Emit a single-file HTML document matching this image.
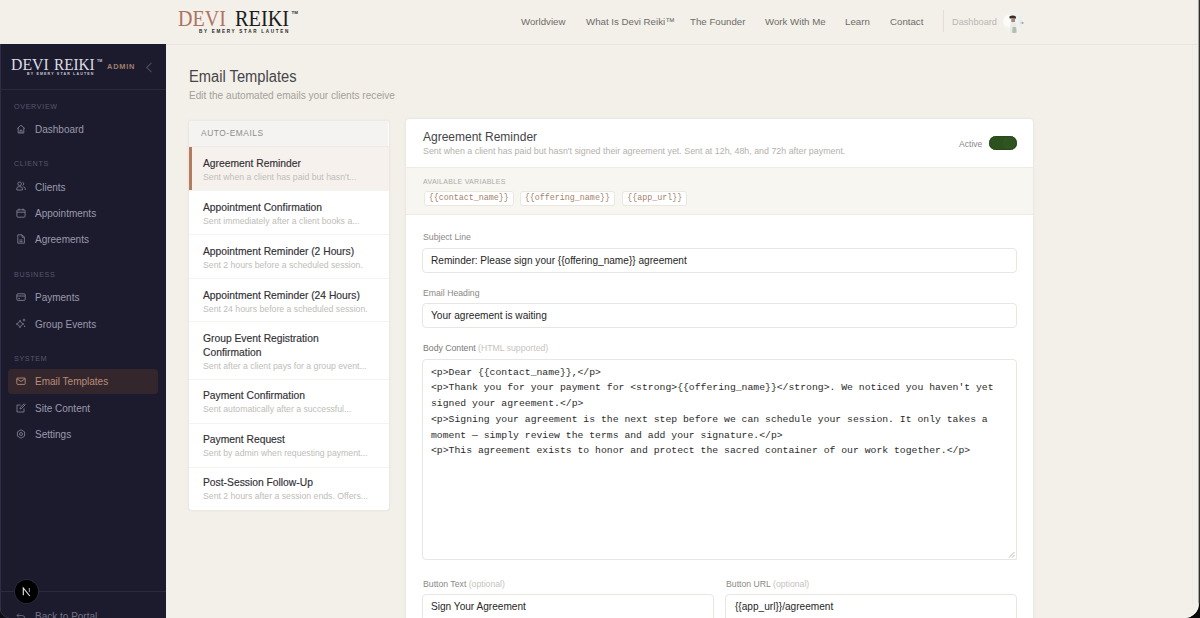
<!DOCTYPE html>
<html><head><meta charset="utf-8">
<style>
*{box-sizing:border-box;margin:0;padding:0}
html,body{width:1200px;height:618px;overflow:hidden}
body{background:#f3f0e9;font-family:"Liberation Sans",sans-serif;position:relative;color:#2a2a2e}
.abs{position:absolute;white-space:nowrap}
#hdr{position:absolute;left:0;top:0;width:1200px;height:45px;background:#f3f0ea;border-bottom:1px solid #e9e5de}
.nav{position:absolute;top:16px;font-size:9.7px;line-height:12px;color:#6e6c68}
.logo{position:absolute;font-family:"Liberation Serif",serif;white-space:nowrap;transform-origin:0 0}
.sub{position:absolute;font-family:"Liberation Sans",sans-serif;font-weight:bold;white-space:nowrap;transform-origin:0 0}
#side{position:absolute;left:0;top:44px;width:166px;height:574px;background:#1c1b2e}
.sec{position:absolute;left:14px;font-size:7.1px;letter-spacing:0.7px;color:#57566b;line-height:8px}
.item{position:absolute;left:35px;font-size:10px;line-height:12px;color:#9a99ab}
.ico{position:absolute;left:16px;width:10px;height:10px}
.card{position:absolute;background:#fff;border:1px solid #ece9e4;border-radius:4px;box-shadow:0 0 2px rgba(60,40,20,0.06)}
.li{position:absolute;left:0;width:199.5px;border-top:1px solid #f5f3f0}
.li .t{position:absolute;left:14px;font-size:10.3px;line-height:14px;color:#313035;-webkit-text-stroke:0.15px #313035;white-space:nowrap}
.li .d{position:absolute;left:14px;font-size:8.7px;line-height:11px;color:#c0bdb8;white-space:nowrap}
.lbl{position:absolute;left:17px;font-size:8.7px;line-height:11px;color:#8b8986;white-space:nowrap}
.lbl i{font-style:normal;color:#c6c3be}
.inp{position:absolute;background:#fff;border:1px solid #e9e6e1;border-radius:4px}
.inp span{position:absolute;left:8px;font-size:10.1px;line-height:12px;color:#262626;white-space:nowrap}
.chip{position:absolute;top:71.8px;height:15px;border:1px solid #ece7df;border-radius:3px;background:#fff;font-family:"Liberation Mono",monospace;font-size:8.35px;line-height:13px;color:#a47f69;padding:0 4.2px;white-space:nowrap}
pre{font-family:"Liberation Mono",monospace;font-size:9.78px;line-height:15.8px;color:#2b2b2b;white-space:pre}
</style></head><body>

<div id="hdr">
  <div class="logo" style="left:177.6px;top:6px;font-size:24px;line-height:24px;color:#ad7361;transform:scaleX(0.835)">DEVI</div>
  <div class="logo" style="left:234.6px;top:6px;font-size:24px;line-height:24px;color:#1c1c1c;transform:scaleX(0.845)">REIKI</div>
  <div class="logo" style="left:291.5px;top:9.8px;font-size:4.4px;line-height:5px;color:#2a2a2a;font-family:'Liberation Sans',sans-serif;font-weight:bold">TM</div>
  <div class="sub" style="left:199px;top:28.7px;font-size:4.6px;line-height:5px;letter-spacing:1.7px;color:#262626">BY EMERY STAR LAUTEN</div>
  <div class="nav" style="left:521px">Worldview</div>
  <div class="nav" style="left:586px">What Is Devi Reiki™</div>
  <div class="nav" style="left:690px">The Founder</div>
  <div class="nav" style="left:765px">Work With Me</div>
  <div class="nav" style="left:845px">Learn</div>
  <div class="nav" style="left:890px">Contact</div>
  <div class="abs" style="left:943px;top:10px;width:1px;height:22px;background:#e3dfd7"></div>
  <div class="nav" style="left:952px;color:#b8b5b0;font-size:9.2px">Dashboard</div>
  <svg class="abs" style="left:1002.5px;top:12px" width="21" height="21" viewBox="0 0 21 21">
    <defs><clipPath id="avc"><circle cx="10.5" cy="10.5" r="10.5"/></clipPath></defs>
    <g clip-path="url(#avc)">
      <rect width="21" height="21" fill="#f2f3ef"/>
      <circle cx="6" cy="9" r="6" fill="#fbfcf8"/>
      <path d="M6.3 4.6 Q8.5 3.2 11.5 3.8 Q13.4 4.2 13 6 L12.5 6.8 Q9.5 6.2 6.6 6.6 Z" fill="#3b2d2a"/>
      <path d="M8.2 6.5 H12 V9.8 Q10 10.8 8.2 9.8 Z" fill="#a8877a"/>
      <path d="M7.5 10.5 Q10 9.5 13 10.5 L14 21 H7 Z" fill="#e9ebe6"/>
      <path d="M9.5 15.5 Q11 14 13.2 15.5 L13.6 21 H9.2 Z" fill="#b4bdae"/>
      <rect x="17.2" y="9.8" width="3.4" height="2.2" rx="1" fill="#a6a8a1"/>
      <rect x="16" y="4" width="3" height="12" fill="#e8ecea" opacity="0.7"/>
    </g>
  </svg>
</div>

<div id="side">
  <div class="abs" style="left:0;top:0;width:1px;height:574px;background:#2f2e44"></div>
  <div class="logo" style="left:11.4px;top:13px;font-size:16.6px;line-height:16.6px;color:#dddce4;transform:scaleX(0.95)">DEVI</div>
  <div class="logo" style="left:53.7px;top:13px;font-size:16.6px;line-height:16.6px;color:#dddce4;transform:scaleX(0.917)">REIKI</div>
  <div class="logo" style="left:97px;top:14.5px;font-size:3.6px;line-height:4px;color:#c8c7d0;font-family:'Liberation Sans',sans-serif;font-weight:bold">TM</div>
  <div class="sub" style="left:27px;top:28px;font-size:3.6px;line-height:4px;letter-spacing:1.15px;color:#c9c8d2">BY EMERY STAR LAUTEN</div>
  <div class="abs" style="left:107px;top:19px;font-size:7.4px;line-height:8px;font-weight:bold;letter-spacing:0.8px;color:#a07f6d">ADMIN</div>
  <svg class="abs" style="left:144.5px;top:17.5px" width="8" height="11" viewBox="0 0 8 11"><path d="M6.5 0.8 L1.6 5.5 L6.5 10.2" fill="none" stroke="#4a495c" stroke-width="1.1"/></svg>
  <div class="abs" style="left:0;top:45px;width:166px;height:1px;background:#2a2939"></div>

  <div class="sec" style="top:59px">OVERVIEW</div>
  <svg class="ico" style="top:80px" viewBox="0 0 10 10"><path d="M1.2 4.6 L5 1.2 L8.8 4.6 M2.2 3.8 V9 H7.8 V3.8 M4 9 V6.2 H6 V9" fill="none" stroke="#7e7d8f" stroke-width="0.9"/></svg>
  <div class="item" style="top:80px">Dashboard</div>

  <div class="sec" style="top:116px">CLIENTS</div>
  <svg class="ico" style="top:137px" viewBox="0 0 10 10"><circle cx="3.6" cy="2.8" r="1.8" fill="none" stroke="#7e7d8f" stroke-width="0.9"/><path d="M0.8 9 V7.4 Q0.8 5.6 3.6 5.6 Q6.4 5.6 6.4 7.4 V9 Z M6.5 1.2 A1.8 1.8 0 0 1 6.5 4.6 M7.4 5.8 Q9.2 6.2 9.2 7.6 V9" fill="none" stroke="#7e7d8f" stroke-width="0.9"/></svg>
  <div class="item" style="top:137.5px">Clients</div>
  <svg class="ico" style="top:164px" viewBox="0 0 10 10"><rect x="0.9" y="1.8" width="8.2" height="7.4" rx="1" fill="none" stroke="#7e7d8f" stroke-width="0.9"/><path d="M3 0.5 V2.6 M7 0.5 V2.6 M0.9 4.2 H9.1" fill="none" stroke="#7e7d8f" stroke-width="0.9"/></svg>
  <div class="item" style="top:163.7px">Appointments</div>
  <svg class="ico" style="top:190px" viewBox="0 0 10 10"><path d="M1.8 0.8 H6 L8.4 3.2 V9.2 H1.8 Z M6 0.8 V3.2 H8.4 M3.4 6 H6.6 M3.4 7.6 H6.6" fill="none" stroke="#7e7d8f" stroke-width="0.9"/></svg>
  <div class="item" style="top:190px">Agreements</div>

  <div class="sec" style="top:226.5px">BUSINESS</div>
  <svg class="ico" style="top:248px" viewBox="0 0 10 10"><rect x="0.8" y="1.8" width="8.4" height="6.6" rx="1" fill="none" stroke="#7e7d8f" stroke-width="0.9"/><path d="M0.8 4 H9.2 M2.2 6.6 H4" fill="none" stroke="#7e7d8f" stroke-width="0.9"/></svg>
  <div class="item" style="top:248px">Payments</div>
  <svg class="ico" style="top:274px" viewBox="0 0 10 10"><path d="M4 2.2 Q4.6 5.4 7.8 6 Q4.6 6.6 4 9.8 Q3.4 6.6 0.2 6 Q3.4 5.4 4 2.2 Z" fill="none" stroke="#7e7d8f" stroke-width="0.85" stroke-linejoin="round"/><path d="M8 0.6 V3.4 M6.6 2 H9.4" stroke="#7e7d8f" stroke-width="0.8"/><circle cx="8.6" cy="8.2" r="0.7" fill="#7e7d8f"/></svg>
  <div class="item" style="top:274.6px">Group Events</div>

  <div class="sec" style="top:311px">SYSTEM</div>
  <div class="abs" style="left:8px;top:325px;width:150px;height:25px;background:#33272d;border-radius:4px"></div>
  <svg class="ico" style="top:332px" viewBox="0 0 10 10"><rect x="0.8" y="2" width="8.4" height="6.4" rx="0.8" fill="none" stroke="#b88a76" stroke-width="0.9"/><path d="M0.8 2.6 L5 5.6 L9.2 2.6" fill="none" stroke="#b88a76" stroke-width="0.9"/></svg>
  <div class="item" style="top:332px;color:#bb8c77">Email Templates</div>
  <svg class="ico" style="top:358.5px" viewBox="0 0 10 10"><path d="M8 5.4 V9 H1 V2 H4.6 M4 6 L4.4 4.4 L8.2 0.8 L9.2 1.8 L5.4 5.6 Z" fill="none" stroke="#7e7d8f" stroke-width="0.9"/></svg>
  <div class="item" style="top:359px">Site Content</div>
  <svg class="ico" style="top:384.5px" viewBox="0 0 10 10"><circle cx="5" cy="5" r="1.5" fill="none" stroke="#7e7d8f" stroke-width="0.9"/><path d="M5 0.8 L8.6 2.9 V7.1 L5 9.2 L1.4 7.1 V2.9 Z" fill="none" stroke="#7e7d8f" stroke-width="0.9"/></svg>
  <div class="item" style="top:385px">Settings</div>

  <div class="abs" style="left:0;top:547px;width:166px;height:1px;background:#2c2b3e"></div>
  <svg class="ico" style="top:568px" viewBox="0 0 10 10"><path d="M3 1.5 L1 3.5 L3 5.5 M1 3.5 H6 Q9 3.5 9 6.5 Q9 9 6 9 H4" fill="none" stroke="#6a697c" stroke-width="0.9"/></svg>
  <div class="item" style="top:567px;color:#727185">Back to Portal</div>
  <div class="abs" style="left:15px;top:536px;width:23px;height:23px;border-radius:50%;background:#000;box-shadow:0 0 0 1px #2a2a36"></div>
  <svg class="abs" style="left:21px;top:542px" width="11" height="11" viewBox="0 0 11 11"><path d="M2.3 9.2 V2 L8.8 10" fill="none" stroke="#ececec" stroke-width="1.1"/><path d="M8.3 2 V6.2" fill="none" stroke="#bdbdbd" stroke-width="0.9"/></svg>
  <svg class="abs" style="left:0;top:558px" width="16" height="16" viewBox="0 0 16 16"><path d="M0 5.7 A10.4 10.4 0 0 0 9 16 L0 16 Z" fill="#0e0e16"/><path d="M0 5.7 A10.4 10.4 0 0 0 9 16" fill="none" stroke="#3c3b48" stroke-width="0.8"/></svg>
</div>

<!-- Main -->
<div class="abs" style="left:189px;top:68px;font-size:15.8px;line-height:18px;color:#46454a;transform:scaleX(0.93);transform-origin:0 0">Email Templates</div>
<div class="abs" style="left:189px;top:90px;font-size:10.1px;line-height:12px;color:#a3a09b">Edit the automated emails your clients receive</div>

<div class="card" style="left:188px;top:119.5px;width:202px;height:391px;overflow:hidden">
  <div class="abs" style="left:0;top:0;width:199px;height:26px;background:#f4f3f1"></div>
  <div class="abs" style="left:12px;top:7px;font-size:8.4px;line-height:10px;letter-spacing:0.55px;color:#8f8d8a">AUTO-EMAILS</div>
  <div class="li" style="top:25px;height:45px;background:#f7f1ed;border-top:1px solid #efebe6"><div class="abs" style="left:0;top:0;width:2.5px;height:44px;background:#b57b5e"></div><div class="t" style="top:10px">Agreement Reminder</div><div class="d" style="top:25px">Sent when a client has paid but hasn't...</div></div>
  <div class="li" style="top:69px;height:44px"><div class="t" style="top:10px">Appointment Confirmation</div><div class="d" style="top:25px">Sent immediately after a client books a...</div></div>
  <div class="li" style="top:113px;height:44px"><div class="t" style="top:10px">Appointment Reminder (2 Hours)</div><div class="d" style="top:25px">Sent 2 hours before a scheduled session.</div></div>
  <div class="li" style="top:157px;height:44px"><div class="t" style="top:10px">Appointment Reminder (24 Hours)</div><div class="d" style="top:25px">Sent 24 hours before a scheduled session.</div></div>
  <div class="li" style="top:200px;height:58px"><div class="t" style="top:10px">Group Event Registration</div><div class="t" style="top:24px">Confirmation</div><div class="d" style="top:39px">Sent after a client pays for a group event...</div></div>
  <div class="li" style="top:258px;height:44px"><div class="t" style="top:9px">Payment Confirmation</div><div class="d" style="top:24px">Sent automatically after a successful...</div></div>
  <div class="li" style="top:302.5px;height:44px"><div class="t" style="top:8.5px">Payment Request</div><div class="d" style="top:23.5px">Sent by admin when requesting payment...</div></div>
  <div class="li" style="top:346px;height:44px"><div class="t" style="top:8px">Post-Session Follow-Up</div><div class="d" style="top:23px">Sent 2 hours after a session ends. Offers...</div></div>
</div>

<div class="card" style="left:405px;top:118px;width:629px;height:520px;overflow:hidden">
  <div class="abs" style="left:17px;top:11px;font-size:12px;line-height:15px;color:#444349">Agreement Reminder</div>
  <div class="abs" style="left:17px;top:26.5px;font-size:8.87px;line-height:11px;color:#b4b1ac">Sent when a client has paid but hasn't signed their agreement yet. Sent at 12h, 48h, and 72h after payment.</div>
  <div class="abs" style="left:553px;top:20px;font-size:8.6px;line-height:10px;color:#8a8986">Active</div>
  <div class="abs" style="left:583px;top:17px;width:28px;height:14px;border-radius:7px;background:#2d501f;box-shadow:inset 0 0 0 0.6px #24421a"></div>
  <div class="abs" style="left:598px;top:19px;width:10px;height:10px;border-radius:50%;background:#2f541f;box-shadow:0 0 0 0.5px #365e25"></div>
  <div class="abs" style="left:0;top:48px;width:627px;height:48px;background:#f8f6f1;border-top:1px solid #efece6;border-bottom:1px solid #efece6"></div>
  <div class="abs" style="left:17px;top:59px;font-size:7px;line-height:8px;letter-spacing:0.3px;color:#aeaba6">AVAILABLE VARIABLES</div>
  <div class="chip" style="left:17.5px">{{contact_name}}</div>
  <div class="chip" style="left:113.6px">{{offering_name}}</div>
  <div class="chip" style="left:216px">{{app_url}}</div>

  <div class="lbl" style="top:113px">Subject Line</div>
  <div class="inp" style="left:16px;top:128.5px;width:594.5px;height:25.5px"><span style="top:6px">Reminder: Please sign your {{offering_name}} agreement</span></div>
  <div class="lbl" style="top:169px">Email Heading</div>
  <div class="inp" style="left:16px;top:183.5px;width:594.5px;height:25.5px"><span style="top:6px">Your agreement is waiting</span></div>
  <div class="lbl" style="top:224px;color:#7a7875">Body Content <i>(HTML supported)</i></div>
  <div class="inp" style="left:16px;top:239.5px;width:594.5px;height:201px;border-bottom-right-radius:1px">
    <pre style="position:absolute;left:8px;top:5px">&lt;p&gt;Dear {{contact_name}},&lt;/p&gt;
&lt;p&gt;Thank you for your payment for &lt;strong&gt;{{offering_name}}&lt;/strong&gt;. We noticed you haven't yet
signed your agreement.&lt;/p&gt;
&lt;p&gt;Signing your agreement is the next step before we can schedule your session. It only takes a
moment — simply review the terms and add your signature.&lt;/p&gt;
&lt;p&gt;This agreement exists to honor and protect the sacred container of our work together.&lt;/p&gt;</pre>
    <svg class="abs" style="left:585px;top:191px" width="7" height="7" viewBox="0 0 7 7"><path d="M6.5 1 L1 6.5 M6.5 4 L4 6.5" stroke="#9a9894" stroke-width="0.7"/></svg>
  </div>
  <div class="lbl" style="top:460px">Button Text <i>(optional)</i></div>
  <div class="inp" style="left:16px;top:474.5px;width:291.5px;height:30px"><span style="top:6px">Sign Your Agreement</span></div>
  <div class="lbl" style="left:320px;top:460px">Button URL <i>(optional)</i></div>
  <div class="inp" style="left:319px;top:474.5px;width:291.5px;height:30px"><span style="top:6px;left:9px">{{app_url}}/agreement</span></div>
</div>

<div class="abs" style="left:1192px;top:45px;width:1px;height:560px;background:#eeebe5"></div>
<div class="abs" style="left:1198px;top:0;width:1px;height:618px;background:#a9a7a2"></div>
<div class="abs" style="left:1199px;top:0;width:1px;height:618px;background:#2e2e2e"></div>
<svg class="abs" style="left:1170px;top:590px" width="30" height="28" viewBox="0 0 30 28"><path d="M29 13.5 A14.5 14.5 0 0 1 14.5 28 L30 28 L30 13.5 Z" fill="#0a0a0a"/><path d="M28.6 13.5 A14.1 14.1 0 0 1 14.5 27.6" fill="none" stroke="#f8f8f6" stroke-width="0.9"/></svg>
</body></html>
